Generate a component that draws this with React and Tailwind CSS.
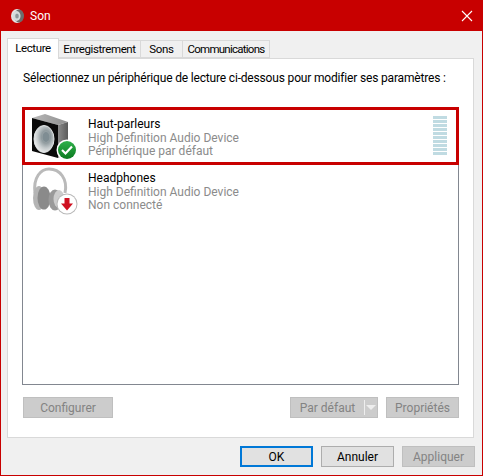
import React from "react";

function SpeakerIcon() {
  return (
    <svg width="50" height="50" viewBox="0 0 50 50" className="shrink-0">
      <defs>
        <linearGradient id="side" x1="0" y1="0" x2="1" y2="0">
          <stop offset="0" stopColor="#8a8a8a" />
          <stop offset="1" stopColor="#5a5a5a" />
        </linearGradient>
        <linearGradient id="top" x1="0" y1="0" x2="1" y2="0">
          <stop offset="0" stopColor="#b8b8b8" />
          <stop offset="1" stopColor="#8e8e8e" />
        </linearGradient>
        <radialGradient id="cone" cx="0.6" cy="0.42" r="0.65">
          <stop offset="0" stopColor="#b9c3c7" />
          <stop offset="0.35" stopColor="#8f9a9e" />
          <stop offset="0.65" stopColor="#c4cacc" />
          <stop offset="1" stopColor="#f4f4f4" />
        </radialGradient>
        <linearGradient id="badge" x1="0" y1="0" x2="0" y2="1">
          <stop offset="0" stopColor="#2fb04a" />
          <stop offset="1" stopColor="#0b7a20" />
        </linearGradient>
      </defs>
      <path d="M3 7 L16 3 L39 11 L29 14 Z" fill="url(#top)" />
      <path d="M29 14 L39 11 L39 43 L29 47 Z" fill="url(#side)" />
      <path d="M3 7 L29 14 L29 47 L3 40 Z" fill="#0a0a0a" />
      <ellipse cx="15" cy="28" rx="10" ry="13.5" fill="url(#cone)" stroke="#dfe3e4" strokeWidth="1" />
      <ellipse cx="17" cy="26" rx="3.5" ry="5" fill="#7f8d93" />
      <circle cx="38" cy="39" r="10.5" fill="#fff" />
      <circle cx="38" cy="39" r="9" fill="url(#badge)" />
      <path d="M33 39 L36.5 42.5 L43 35.5" fill="none" stroke="#fff" strokeWidth="2.2" />
    </svg>
  );
}

function HeadphonesIcon() {
  return (
    <svg width="50" height="50" viewBox="0 0 50 50" className="shrink-0">
      <path d="M6 27 C4 11 12 3 20 3 C31 3 39 13 36 27" fill="none" stroke="#bababa" strokeWidth="3" />
      <ellipse cx="10" cy="32" rx="6" ry="12" fill="#b4b4b4" />
      <ellipse cx="15" cy="32" rx="6.5" ry="11.5" fill="#8a8a8a" />
      <ellipse cx="26" cy="34" rx="6.5" ry="10.5" fill="#999999" />
      <ellipse cx="30" cy="33" rx="5.5" ry="9" fill="#cccccc" />
      <circle cx="38" cy="38" r="10.5" fill="#b8b8b8" />
      <circle cx="38" cy="38" r="9.5" fill="#fff" />
      <path d="M35.5 32 H40.5 V37.5 H44 L38 44.5 L32 37.5 H35.5 Z" fill="#cf1020" />
    </svg>
  );
}

function DeviceRow({ icon, name, status, selected }) {
  return (
    <div
      className={
        selected
          ? "-mx-px flex h-[58px] items-start border-[3px] border-[#c80000] pl-[4px] pr-[9px]"
          : "flex h-[54px] items-start pl-[6px] pr-[10px]"
      }
    >
      <div className="mt-px">{icon}</div>
      <div className={"ml-[9px] flex-1 text-[12px] leading-[13.5px] " + (selected ? "pt-[8px]" : "pt-[7px]")}>
        <div className="text-black">{name}</div>
        <div className="text-[#8b8b8b]">High Definition Audio Device</div>
        <div className="text-[#8b8b8b]">{status}</div>
      </div>
      {selected && (
        <div className="mt-[6px] flex w-[14px] flex-col gap-px">
          {Array.from({ length: 10 }).map((_, i) => (
            <div key={i} className="h-[3px] bg-[#c0dbe2]" />
          ))}
        </div>
      )}
    </div>
  );
}

function Tab({ children, active, className = "" }) {
  return (
    <div
      className={
        (active
          ? "relative z-10 flex h-[21px] items-center justify-center border border-b-0 border-[#d9d9d9] bg-white text-black "
          : "mt-[2px] flex h-[18px] items-center justify-center border border-l-0 border-[#d9d9d9] bg-[#f0f0f0] pt-[2px] text-black ") +
        className
      }
    >
      {children}
    </div>
  );
}

function Btn({ children, disabled, primary, className = "" }) {
  const look = disabled
    ? "border-[#bfbfbf] bg-[#cccccc] text-[#838383]"
    : primary
    ? "border-2 border-[#0078d7] bg-[#e1e1e1] text-black"
    : "border-[#adadad] bg-[#e1e1e1] text-black";
  return (
    <div className={"flex h-[21px] items-center justify-center border text-[12px] " + look + " " + className}>
      {children}
    </div>
  );
}

export default function App() {
  return (
    <div
      className="flex h-[476px] w-[483px] flex-col border border-t-0 border-[#c80000] bg-[#f0f0f0] text-[12px]"
      style={{ fontFamily: 'Roboto, "Noto Sans", sans-serif' }}
    >
      <div className="-mx-px flex h-[31px] shrink-0 items-center bg-[#c80000] pl-[10px] text-white">
        <svg width="15" height="16" viewBox="0 0 15 16">
          <ellipse cx="7" cy="8" rx="6" ry="7" fill="#e4e4e4" />
          <ellipse cx="9" cy="8" rx="5" ry="6.5" fill="#6c6c6c" />
          <ellipse cx="6.5" cy="8" rx="4" ry="5" fill="#d5dadb" />
          <ellipse cx="7" cy="8" rx="1.8" ry="2.5" fill="#8d979b" />
        </svg>
        <span className="ml-[5px] flex-1">Son</span>
        <svg width="12" height="12" viewBox="0 0 12 12" className="mr-[10px]">
          <path d="M1 1 L11 11 M11 1 L1 11" stroke="#fff" strokeWidth="1.1" />
        </svg>
      </div>

      <div className="mt-[7px] flex h-[20px] items-start pl-[6px] text-[11.5px]">
        <Tab active className="w-[52px] tracking-[-0.4px]">Lecture</Tab>
        <Tab className="w-[82px] tracking-[-0.4px]">Enregistrement</Tab>
        <Tab className="w-[42px] tracking-[-0.3px]">Sons</Tab>
        <Tab className="w-[87px] tracking-[-0.75px]">Communications</Tab>
      </div>

      <div className="ml-[6px] mr-[8px] flex h-[380px] flex-col border border-[#d9d9d9] bg-white px-[14px]">
        <p className="ml-px mt-[11px] h-[17px] whitespace-nowrap leading-[17px] tracking-[-0.17px] text-black">
          Sélectionnez un périphérique de lecture ci-dessous pour modifier ses paramètres :
        </p>
        <div className="mt-[20px] h-[278px] border border-t-0 border-[#828790]">
          <DeviceRow selected icon={<SpeakerIcon />} name="Haut-parleurs" status="Périphérique par défaut" />
          <DeviceRow icon={<HeadphonesIcon />} name="Headphones" status="Non connecté" />
        </div>
        <div className="mt-[12px] flex pl-px">
          <Btn disabled className="w-[90px]">Configurer</Btn>
          <div className="ml-auto flex h-[21px] w-[88px] items-center border border-[#bfbfbf] bg-[#cccccc] text-[#838383]">
            <span className="flex-1 text-center">Par défaut</span>
            <span className="h-[15px] w-px bg-[#eeeeee]" />
            <svg width="12" height="6" viewBox="0 0 12 6"><path d="M1 0 H11 L6 5 Z" fill="#eeeeee" /></svg>
          </div>
          <Btn disabled className="ml-[8px] w-[73px]">Propriétés</Btn>
        </div>
      </div>

      <div className="mt-[8px] flex justify-end gap-[8px] pr-[7px]">
        <Btn primary className="w-[73px]">OK</Btn>
        <Btn className="w-[73px]">Annuler</Btn>
        <Btn disabled className="w-[73px]">Appliquer</Btn>
      </div>
    </div>
  );
}
